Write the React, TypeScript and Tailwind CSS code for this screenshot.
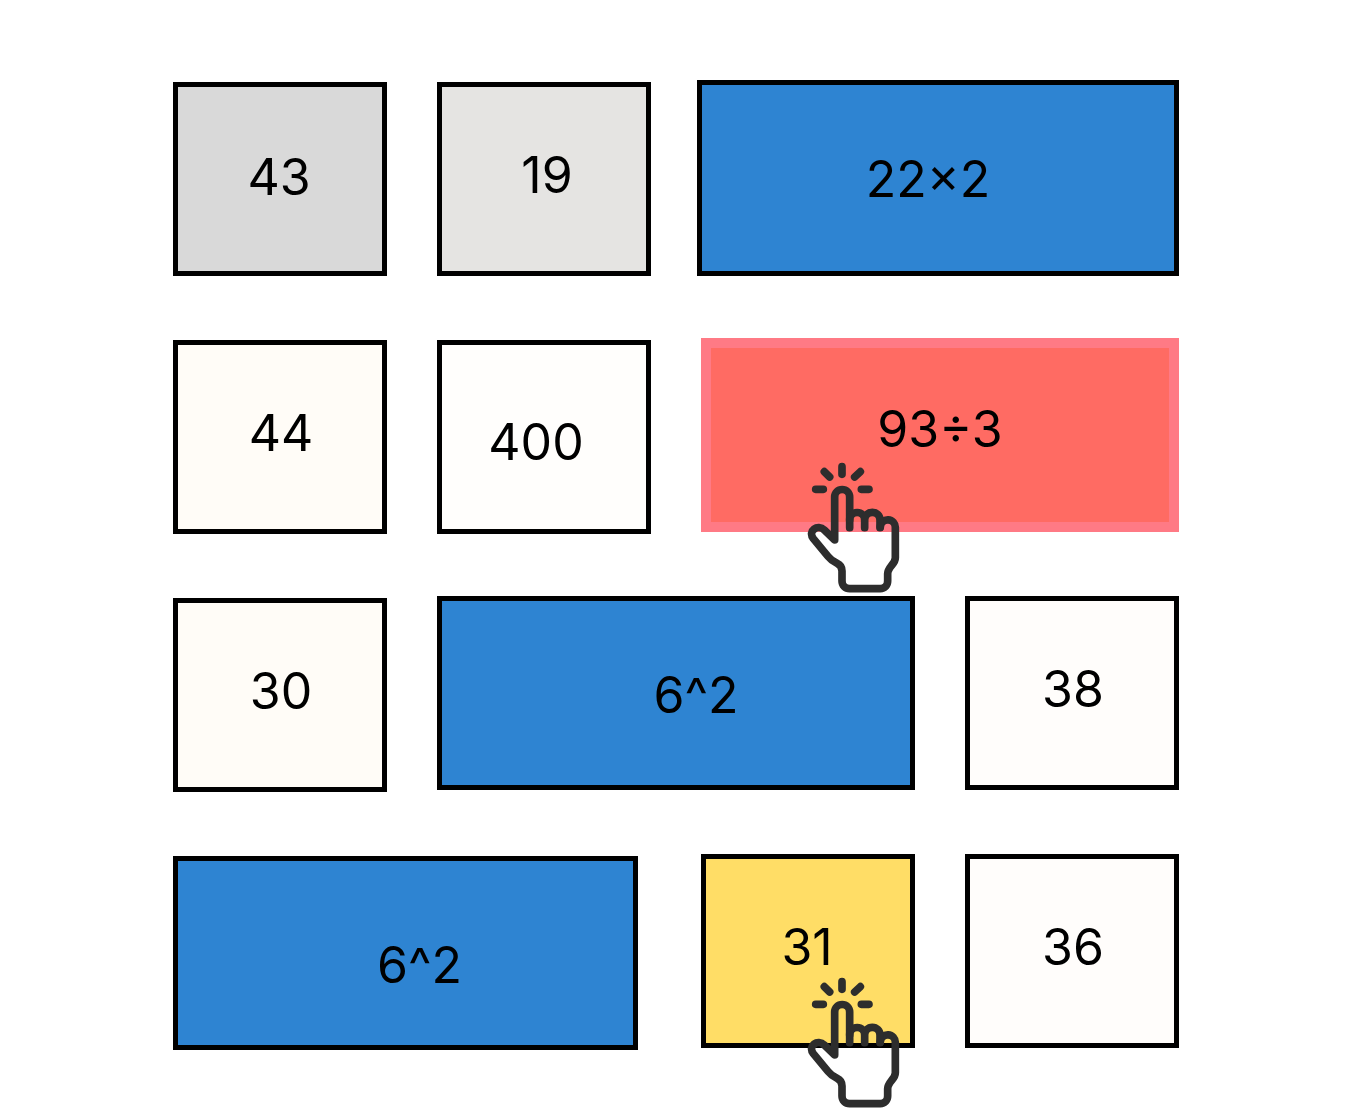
import type { ReactNode } from "react";

const tileBase = "block w-full h-full text-center text-[50px] leading-[60px] text-black";

const single = "h-[194px]";
const light = "border-5 border-black";
const blue = "border-5 border-black bg-[#2e84d2]";

function TapIcon({ className }: { className: string }) {
  return (
    <svg
      className={`pointer-events-none absolute h-[132px] w-[93px] ${className}`}
      viewBox="36 21 279 396"
      fill="none"
      stroke="#2d2d2d"
      strokeWidth="23"
      strokeLinecap="round"
      strokeLinejoin="round"
      aria-hidden="true"
    >
      <path d="M141 35V58M62 103H85M199 103H222M88 50L104 66M196 50L179 66" />
      <path d="M164 218V126A22.5 22.5 0 0 0 119 126V255L88 225C68 206 37 228 55 251L99 304C107 314 113 319 126 325C137 330 141 336 141 348V378C141 391 151 401 164 401H256C269 401 278 391 278 378V356C278 346 282 341 290 331C298 322 301 317 301 308V218A22.5 22.5 0 0 0 256 216" />
      <path d="M164 195A22.5 22.5 0 0 1 209 195V218M209 195A23 23 0 0 1 255 195V218" />
    </svg>
  );
}

interface TileProps {
  label: string;
  cell: string;
  face: string;
  children?: ReactNode;
}

function Tile({ label, cell, face, children }: TileProps) {
  return (
    <div className={`relative ${cell}`}>
      <button type="button" className={`${tileBase} ${face}`}>
        <span className="block h-full">{label}</span>
      </button>
      {children}
    </div>
  );
}

export default function App() {
  return (
    <main className="min-h-screen overflow-hidden bg-white pt-20 pr-[172px] pl-[173px] font-['Inter',sans-serif]">
      <div className="grid auto-rows-[196px] grid-cols-4 gap-x-[50px] gap-y-[62px]">
        <Tile label="43" cell={`${single} self-end`} face={`${light} bg-[#d9d9d9] pt-[60px] pr-0.5`} />
        <Tile label="19" cell={`${single} self-end`} face={`${light} bg-[#e5e4e2] pt-[58px] pl-1.5`} />
        <Tile label="22×2" cell="col-span-2 -ml-1" face={`${blue} pt-16 pr-5`} />

        <Tile label="44" cell={`${single} self-end`} face={`${light} bg-[#fffcf7] pt-[58px] pl-0.5`} />
        <Tile label="400" cell={`${single} self-end`} face={`${light} bg-[#fffefc] pt-[67px] pr-4`} />
        <Tile
          label="93÷3"
          cell={`${single} col-span-2 self-start`}
          face="border-10 border-[#ff7a85] bg-[#ff6b63] pt-[51px]"
        >
          <TapIcon className="top-[124px] left-[106px]" />
        </Tile>

        <Tile label="30" cell={`${single} self-end`} face={`${light} bg-[#fffcf7] pt-[58px] pl-0.5`} />
        <Tile label="6^2" cell={`${single} col-span-2 self-start`} face={`${blue} pt-16 pl-10`} />
        <Tile label="38" cell={`${single} self-start`} face={`${light} bg-[#fffdfb] pt-[58px] pl-0.5`} />

        <Tile label="6^2" cell={`${single} col-span-2 mr-[13px] self-end`} face={`${blue} pt-[74px] pl-7`} />
        <Tile label="31" cell={`${single} self-start`} face={`${light} bg-[#ffdd66] pt-[58px] pr-0.5`}>
          <TapIcon className="top-[123px] left-[106px]" />
        </Tile>
        <Tile label="36" cell={`${single} self-start`} face={`${light} bg-[#fffdfb] pt-[58px] pl-0.5`} />
      </div>
    </main>
  );
}
